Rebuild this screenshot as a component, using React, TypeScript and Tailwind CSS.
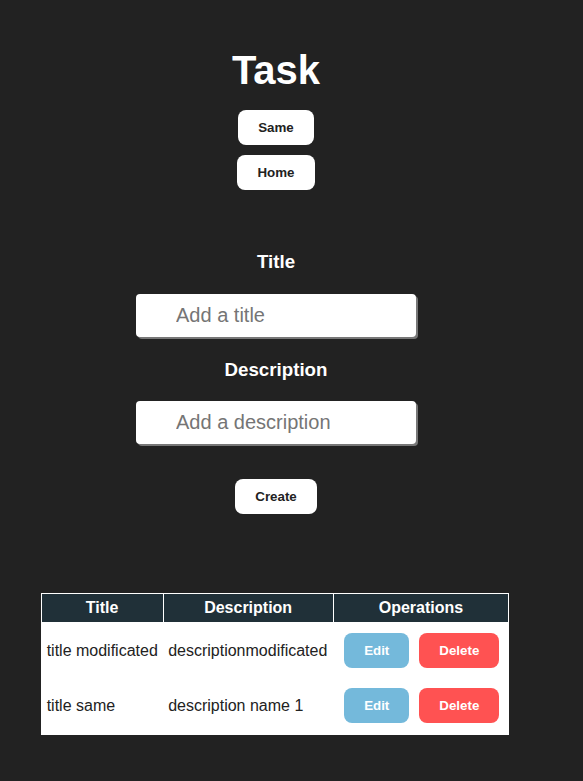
import React from 'react';

type Task = { title: string; description: string };

const tasks: Task[] = [
  { title: 'title modificated', description: 'descriptionmodificated' },
  { title: 'title same', description: 'description name 1' },
];

const btn =
  'bg-white text-[#222] font-bold text-[13.33px] leading-[15px] px-[20px] py-[10px] rounded-lg';

export default function App() {
  return (
    <div className="min-h-[781px] bg-[#222222] font-['Liberation_Sans',Arial,sans-serif]">
      <div className="w-[552px] flex flex-col items-center pt-[47px] pb-[40px]">
        <h1 className="text-[40px] leading-[46px] font-bold text-white">Task</h1>
        <button className={`${btn} mt-[17px]`}>Same</button>
        <button className={`${btn} mt-[10px]`}>Home</button>

        <h3 className="mt-[61px] text-[18.72px] leading-[22px] font-bold text-white">Title</h3>
        <input
          placeholder="Add a title"
          className="mt-[21px] w-[280px] h-[43px] bg-white rounded-[4px] pl-[40px] pr-2 text-[20px] leading-[23px] text-[#222] placeholder:text-[#757575] shadow-[2px_2px_0_#777] outline-none"
        />
        <h3 className="mt-[22px] text-[18.72px] leading-[22px] font-bold text-white">Description</h3>
        <input
          placeholder="Add a description"
          className="mt-[20px] w-[280px] h-[43px] bg-white rounded-[4px] pl-[40px] pr-2 text-[20px] leading-[23px] text-[#222] placeholder:text-[#757575] shadow-[2px_2px_0_#777] outline-none"
        />
        <button className={`${btn} mt-[35px]`}>Create</button>

        <table className="mt-[79px] -ml-[2px] border-collapse bg-white border border-white text-[16px] leading-[18px]">
          <thead>
            <tr className="bg-[#203038] text-white">
              <th className="w-[122px] border border-white p-[5px] font-bold">Title</th>
              <th className="w-[170px] border border-white p-[5px] font-bold">Description</th>
              <th className="w-[175px] border border-white p-[5px] font-bold">Operations</th>
            </tr>
          </thead>
          <tbody className="text-[#222]">
            {tasks.map((t, i) => (
              <tr key={t.title}>
                <td className="p-[5px] align-middle whitespace-nowrap">{t.title}</td>
                <td className="p-[5px] align-middle whitespace-nowrap">{t.description}</td>
                <td className={`p-[5px] pl-[6px] pr-[4px] align-middle ${i === tasks.length - 1 ? 'pb-[6px]' : ''}`}>
                  <div className="flex">
                    <button className="m-[5px] bg-[#74b9db] text-white font-bold text-[13.33px] leading-[15px] px-[20px] py-[10px] rounded-lg">
                      Edit
                    </button>
                    <button className="m-[5px] bg-[#ff5252] text-white font-bold text-[13.33px] leading-[15px] px-[20px] py-[10px] rounded-lg">
                      Delete
                    </button>
                  </div>
                </td>
              </tr>
            ))}
          </tbody>
        </table>
      </div>
    </div>
  );
}
